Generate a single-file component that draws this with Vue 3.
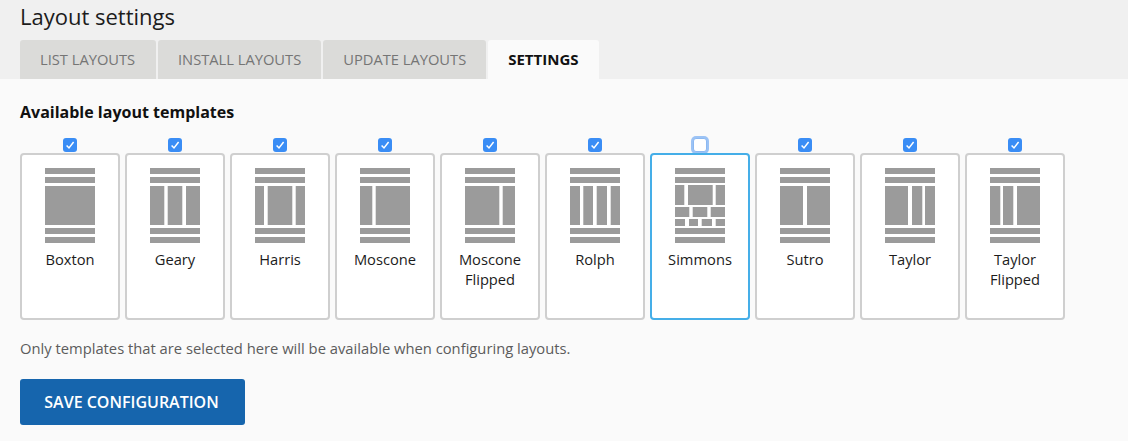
<script setup>
const bars = [[0, 6], [9, 6], [60, 6], [69, 6]]
const mainRow = (cols) => cols.map(([a, b]) => ({ x: a, y: 18, w: b - a, h: 39 }))
const barRects = bars.map(([y, h]) => ({ x: 0, y, w: 50, h }))
const templates = [
  { name: 'Boxton', rects: mainRow([[0, 50]]) },
  { name: 'Geary', rects: mainRow([[0, 14.3], [17.7, 32.3], [36, 50]]) },
  { name: 'Harris', rects: mainRow([[0, 9], [12.7, 37.3], [40.7, 50]]) },
  { name: 'Moscone', rects: mainRow([[0, 12.3], [15.7, 50]]) },
  { name: 'Moscone Flipped', rects: mainRow([[0, 34.3], [37.7, 50]]) },
  { name: 'Rolph', rects: mainRow([[0, 10], [13.3, 23], [26.7, 37], [40.7, 50]]) },
  {
    name: 'Simmons',
    off: true,
    rects: [
      { x: 0, y: 17, w: 9.3, h: 20 }, { x: 13, y: 17, w: 24.7, h: 20 }, { x: 40.7, y: 17, w: 9.3, h: 20 },
      { x: 0, y: 39, w: 14.3, h: 10 }, { x: 17.7, y: 39, w: 14.6, h: 10 }, { x: 35.7, y: 39, w: 14.3, h: 10 },
      { x: 0, y: 51, w: 10, h: 7 }, { x: 14, y: 51, w: 9, h: 7 }, { x: 26.7, y: 51, w: 10.3, h: 7 }, { x: 40.7, y: 51, w: 9.3, h: 7 }
    ]
  },
  { name: 'Sutro', rects: mainRow([[0, 23], [27, 50]]) },
  { name: 'Taylor', rects: mainRow([[0, 23], [27, 37.3], [40, 50]]) },
  { name: 'Taylor Flipped', rects: mainRow([[0, 10.3], [13, 23.3], [27, 50]]) }
]
const tabs = ['List Layouts', 'Install Layouts', 'Update Layouts', 'Settings']
</script>

<template>
  <div class="page">
    <header class="head">
      <h1 class="title">Layout settings</h1>
      <nav class="tabs">
        <a v-for="(t, i) in tabs" :key="t" class="tab" :class="{ active: i === 3 }">{{ t }}</a>
      </nav>
    </header>
    <main class="body">
      <h2 class="sub">Available layout templates</h2>
      <div class="grid">
        <div v-for="t in templates" :key="t.name" class="item">
          <span class="check" :class="{ off: t.off }">
            <svg v-if="!t.off" width="14" height="14" viewBox="0 0 14 14">
              <path d="M3.6 7.4 L6 9.9 L10.6 4" fill="none" stroke="#fff" stroke-width="1.5" />
            </svg>
          </span>
          <div class="card" :class="{ focus: t.off }">
            <svg class="thumb" width="50" height="75" viewBox="0 0 50 75">
              <rect v-for="(r, i) in barRects" :key="'b' + i" :x="r.x" :y="r.y" :width="r.w" :height="r.h" fill="#9b9b9b" />
              <rect v-for="(r, i) in t.rects" :key="i" :x="r.x" :y="r.y" :width="r.w" :height="r.h" fill="#9b9b9b" />
            </svg>
            <div class="name">{{ t.name }}</div>
          </div>
        </div>
      </div>
      <p class="note">Only templates that are selected here will be available when configuring layouts.</p>
      <button class="save" type="button">Save configuration</button>
    </main>
  </div>
</template>

<style>
html, body { margin: 0; background: #fafafa; }
</style>

<style scoped>
.page {
  width: 1128px;
  height: 441px;
  overflow: hidden;
  font-family: "Open Sans", "Noto Sans", sans-serif;
  font-size: 14.7px;
  background: #fafafa;
}
.head {
  background: #f0f0f0;
  padding: 0 20px;
  height: 79px;
  box-sizing: border-box;
}
.title {
  margin: 0;
  height: 40px;
  font-size: 22px;
  font-weight: 400;
  line-height: 32px;
  color: #1c1c1c;
}
.tabs {
  display: flex;
  gap: 2px;
  height: 39px;
}
.tab {
  padding: 0 20px;
  line-height: 39px;
  text-transform: uppercase;
  color: #757575;
  background: #dbdbd9;
  border-radius: 3px 3px 0 0;
}
.tab:first-child {
  box-sizing: border-box;
  min-width: 136px;
}
.tab.active {
  background: #fafafa;
  color: #111;
  font-weight: 700;
  font-size: 15px;
}
.body {
  padding: 23px 20px 0;
}
.sub {
  margin: 0;
  font-size: 16px;
  font-weight: 700;
  line-height: 20px;
  color: #111;
}
.grid {
  display: flex;
  gap: 5px;
  margin-top: 16px;
}
.item {
  width: 100px;
  display: flex;
  flex-direction: column;
  align-items: center;
}
.check {
  width: 14px;
  height: 14px;
  border-radius: 3px;
  background: #3a8df5;
  margin-bottom: 1px;
  display: block;
}
.check svg { display: block; }
.check.off {
  background: #fff;
  box-sizing: border-box;
  border: 1px solid #8cb9f2;
  box-shadow: 0 0 0 2px #9cc3f5;
}
.card {
  width: 100px;
  height: 167px;
  box-sizing: border-box;
  border: 2px solid #cfcfcf;
  border-radius: 4px;
  background: #fff;
  padding: 13px 4px 0;
  text-align: center;
}
.card.focus { border-color: #45aee8; }
.thumb { display: block; margin: 0 auto; }
.name {
  margin-top: 7px;
  line-height: 19.5px;
  color: #1c1c1c;
}
.note {
  margin: 18px 0 0;
  font-size: 14.75px;
  line-height: 20px;
  color: #5c5c5c;
}
.save {
  display: block;
  margin-top: 21px;
  width: 225px;
  height: 46px;
  border: 0;
  border-radius: 3px;
  background: #1665ad;
  color: #fff;
  font: 600 16px "Open Sans", "Noto Sans", sans-serif;
  text-transform: uppercase;
  padding: 0 2px 0 0;
}
</style>
